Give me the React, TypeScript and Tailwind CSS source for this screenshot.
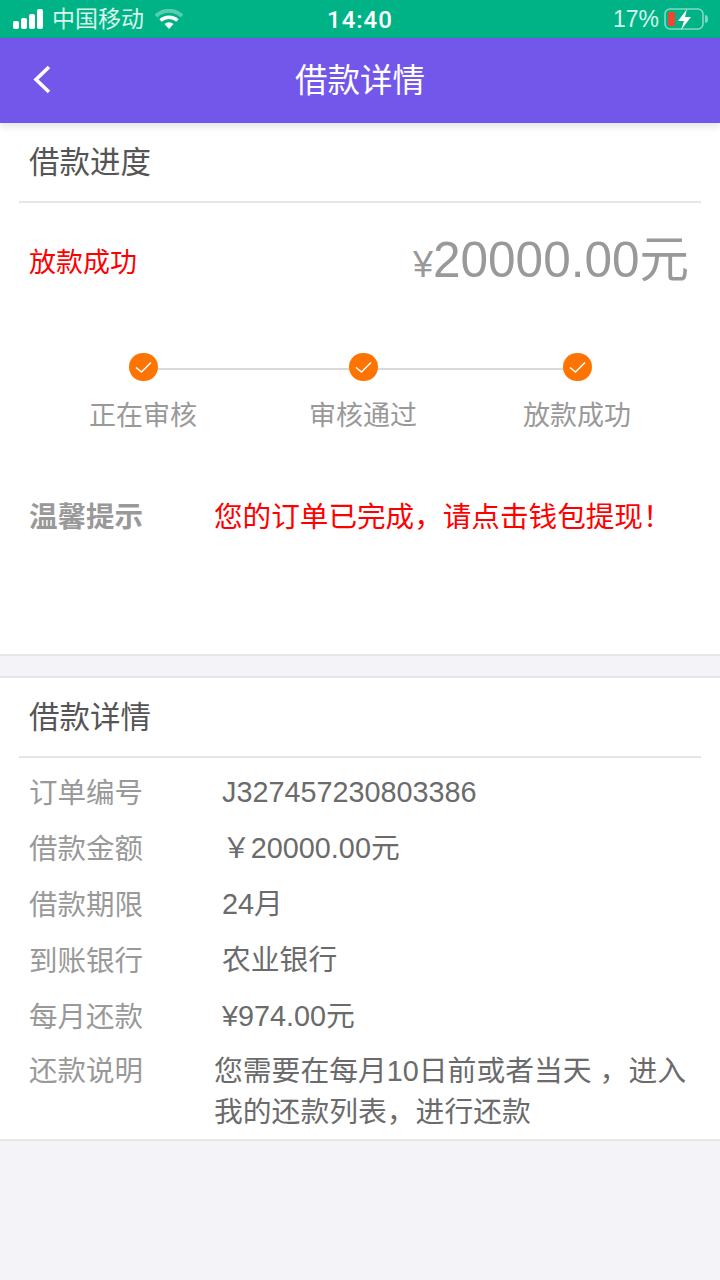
import React from 'react';

const font = "font-['Liberation_Sans','Noto_Sans_CJK_SC',sans-serif]";

const StatusBar = () => (
  <div className="h-[38px] bg-[#00b386] flex items-center justify-between text-white shrink-0 relative">
    <div className="flex items-center pl-[13px]">
      <div className="flex items-end gap-[2px] h-[20px]">
        <div className="w-[6px] h-[8px] bg-white rounded-[2px]" />
        <div className="w-[6px] h-[11px] bg-white rounded-[2px]" />
        <div className="w-[6px] h-[15px] bg-white rounded-[2px]" />
        <div className="w-[6px] h-[20px] bg-white rounded-[2px]" />
      </div>
      <span className="ml-[9px] text-[23px] leading-[30px] text-[#d8f5ec]">中国移动</span>
      <svg className="ml-[11px]" width="28" height="20" viewBox="0 0 28 20">
        <path d="M1 7 A19 19 0 0 1 27 7" fill="none" stroke="#ffffff" strokeOpacity="0.35" strokeWidth="4" />
        <path d="M5.5 11.5 A13 13 0 0 1 22.5 11.5" fill="none" stroke="#fff" strokeWidth="3.5" />
        <path d="M9.5 15 L14 20 L18.5 15 A7 7 0 0 0 9.5 15 Z" fill="#fff" />
      </svg>
    </div>
    <span className="absolute left-[327px] top-[5px] font-['Roboto'] text-[24px] leading-[30px] font-medium tracking-[1px]">14:40</span>
    <div className="flex items-center pr-[12px]">
      <span className="text-[23px] leading-[30px] text-[#d8f5ec]">17%</span>
      <svg className="ml-[5px]" width="44" height="24" viewBox="0 0 44 24">
        <rect x="1" y="2" width="38" height="20" rx="5" fill="none" stroke="#ffffff" strokeOpacity="0.5" strokeWidth="1.6" />
        <rect x="4" y="5" width="7" height="14" rx="1" fill="#f2452f" />
        <path d="M41 8 a3 4 0 0 1 0 8 Z" fill="#ffffff" fillOpacity="0.5" />
        <path d="M23 2 L14 14 H20 L17 23 L27 10 H21 Z" fill="#fff" />
      </svg>
    </div>
  </div>
);

const Header = () => (
  <div className="h-[85px] bg-[#7357eb] flex items-center justify-center relative shrink-0 shadow-[0_3px_8px_rgba(0,0,0,0.12)] z-10">
    <svg className="absolute left-[32px] top-[26px]" width="20" height="30" viewBox="0 0 20 30">
      <path d="M17 3 L4 15.5 L17 28" fill="none" stroke="#fff" strokeWidth="3.6" />
    </svg>
    <span className="text-[32.5px] leading-[40px] text-white">借款详情</span>
  </div>
);

const SectionTitle = ({ children }: { children: React.ReactNode }) => (
  <div className="mx-[19px] h-[80px] pl-[10px] border-b-2 border-[#e6e6e6] flex items-center">
    <span className="text-[30.5px] leading-[40px] text-[#555555]">{children}</span>
  </div>
);

const Check = () => (
  <div className="w-[29px] h-[28px] rounded-full bg-[#ff7300] flex items-center justify-center">
    <svg width="19" height="14" viewBox="0 0 19 14">
      <path d="M2 7.5 L7.5 12 L17 2.5" fill="none" stroke="#fff" strokeWidth="1.6" />
    </svg>
  </div>
);

const steps = [
  { label: '正在审核', gap: 'ml-0' },
  { label: '审核通过', gap: 'ml-[112px]' },
  { label: '放款成功', gap: 'ml-[106px]' },
];

const details = [
  { label: '订单编号', value: 'J327457230803386' },
  { label: '借款金额', value: '￥20000.00元' },
  { label: '借款期限', value: '24月' },
  { label: '到账银行', value: '农业银行' },
  { label: '每月还款', value: '¥974.00元' },
];

export default function App() {
  return (
    <div className={`w-[720px] h-[1280px] bg-[#f3f3f8] flex flex-col overflow-hidden ${font}`}>
      <StatusBar />
      <Header />

      <div className="h-[533px] bg-white border-b-2 border-[#e6e6e6] shrink-0">
        <SectionTitle>借款进度</SectionTitle>

        <div className="flex items-center justify-between pl-[29px] pr-[31px] pt-[29px]">
          <span className="text-[27px] leading-[34px] text-[#ff0000]">放款成功</span>
          <div className="flex items-baseline text-[#999999]">
            <span className="text-[36px] leading-[56px]">¥</span>
            <span className="text-[49.5px] leading-[56px]">20000.00元</span>
          </div>
        </div>

        <div className="relative h-[80px] mt-[60px]">
          <div className="absolute left-[143px] w-[434px] top-[15px] h-[2px] bg-[#d9d9d9]" />
          <div className="flex absolute left-[89px] top-0">
            {steps.map((s) => (
              <div key={s.label} className={`w-[108px] flex flex-col items-center relative ${s.gap}`}>
                <Check />
                <span className="mt-[15px] text-[27px] leading-[40px] text-[#999999] whitespace-nowrap">{s.label}</span>
              </div>
            ))}
          </div>
        </div>

        <div className="flex items-center pl-[29px] mt-[64px]">
          <span className="w-[185px] text-[28.5px] leading-[40px] font-bold text-[#999999]">温馨提示</span>
          <span className="text-[28.6px] leading-[40px] text-[#ff0000] whitespace-nowrap">您的订单已完成，请点击钱包提现！</span>
        </div>
      </div>

      <div className="h-[20px] shrink-0" />

      <div className="bg-white border-y-2 border-[#e6e6e6] shrink-0 h-[465px]">
        <SectionTitle>借款详情</SectionTitle>
        <div className="pt-[7px]">
          {details.map((d) => (
            <div key={d.label} className="h-[56px] flex items-center pl-[29px]">
              <span className="w-[193px] text-[28.5px] text-[#999999] shrink-0">{d.label}</span>
              <span className="text-[28.8px] text-[#6b6b6b] whitespace-nowrap">{d.value}</span>
            </div>
          ))}
          <div className="flex pl-[29px] pt-[6px]">
            <span className="w-[185px] text-[28.5px] leading-[41px] text-[#999999] shrink-0">还款说明</span>
            <span className="w-[480px] text-[28.8px] leading-[41px] text-[#6b6b6b]">您需要在每月10日前或者当天 ，进入我的还款列表，进行还款</span>
          </div>
        </div>
      </div>
    </div>
  );
}
